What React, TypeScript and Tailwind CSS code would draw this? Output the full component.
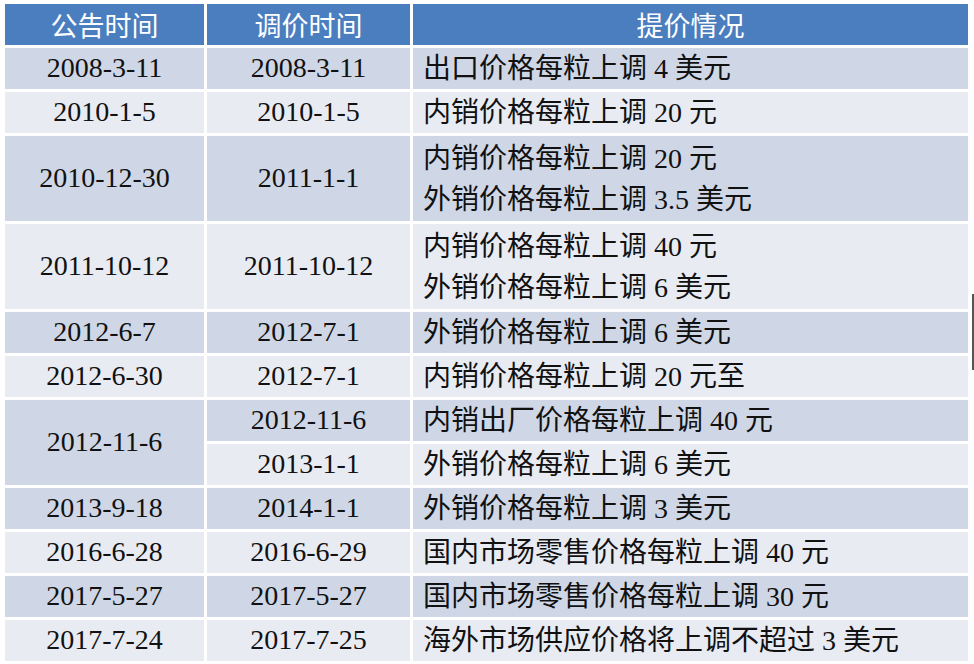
import React from "react";

type Row = {
  announce: string;
  span: number;
  subs: { date: string; lines: string[]; dark: boolean }[];
  dark: boolean;
};

const ROWS: Row[] = [
  { announce: "2008-3-11", span: 1, dark: true, subs: [{ date: "2008-3-11", lines: ["出口价格每粒上调 4 美元"], dark: true }] },
  { announce: "2010-1-5", span: 1, dark: false, subs: [{ date: "2010-1-5", lines: ["内销价格每粒上调 20 元"], dark: false }] },
  {
    announce: "2010-12-30",
    span: 2,
    dark: true,
    subs: [{ date: "2011-1-1", lines: ["内销价格每粒上调 20 元", "外销价格每粒上调 3.5 美元"], dark: true }],
  },
  {
    announce: "2011-10-12",
    span: 2,
    dark: false,
    subs: [{ date: "2011-10-12", lines: ["内销价格每粒上调 40 元", "外销价格每粒上调 6 美元"], dark: false }],
  },
  { announce: "2012-6-7", span: 1, dark: true, subs: [{ date: "2012-7-1", lines: ["外销价格每粒上调 6 美元"], dark: true }] },
  { announce: "2012-6-30", span: 1, dark: false, subs: [{ date: "2012-7-1", lines: ["内销价格每粒上调 20 元至"], dark: false }] },
  {
    announce: "2012-11-6",
    span: 2,
    dark: true,
    subs: [
      { date: "2012-11-6", lines: ["内销出厂价格每粒上调 40 元"], dark: true },
      { date: "2013-1-1", lines: ["外销价格每粒上调 6 美元"], dark: false },
    ],
  },
  { announce: "2013-9-18", span: 1, dark: true, subs: [{ date: "2014-1-1", lines: ["外销价格每粒上调 3 美元"], dark: true }] },
  { announce: "2016-6-28", span: 1, dark: false, subs: [{ date: "2016-6-29", lines: ["国内市场零售价格每粒上调 40 元"], dark: false }] },
  { announce: "2017-5-27", span: 1, dark: true, subs: [{ date: "2017-5-27", lines: ["国内市场零售价格每粒上调 30 元"], dark: true }] },
  { announce: "2017-7-24", span: 1, dark: false, subs: [{ date: "2017-7-25", lines: ["海外市场供应价格将上调不超过 3 美元"], dark: false }] },
];

function bg(dark: boolean) {
  return dark ? "bg-[#cfd7e6]" : "bg-[#e9ebf3]";
}

export default function App() {
  return (
    <div className="relative w-[974px] h-[664px] bg-white overflow-hidden">
      <div
        className="grid grid-cols-[199px_203px_555px] grid-rows-[41px_repeat(14,41px)] gap-[3px] pl-[5px] pt-[4px] text-[28px] text-[#111] font-['Liberation_Serif','Noto_Sans_CJK_SC',serif]"
      >
        {/* header */}
        {["公告时间", "调价时间", "提价情况"].map((h) => (
          <div
            key={h}
            className="flex items-center justify-center bg-[#4a7ebf] text-white font-['Noto_Sans_CJK_SC',sans-serif] text-[27px] leading-none"
          >
            {h}
          </div>
        ))}

        {ROWS.map((r) => (
          <React.Fragment key={r.announce}>
            <div
              className={`flex items-center justify-center pb-[2px] ${bg(r.dark)} ${
                r.span === 2 ? "row-span-2" : ""
              }`}
            >
              {r.announce}
            </div>
            {r.subs.map((s) => (
              <React.Fragment key={s.date + s.lines[0]}>
                <div
                  className={`flex items-center justify-center pb-[2px] ${bg(s.dark)} ${
                    r.subs.length === 1 && r.span === 2 ? "row-span-2" : ""
                  }`}
                >
                  {s.date}
                </div>
                <div
                  className={`flex flex-col justify-center pl-[10px] leading-[41px] whitespace-nowrap ${bg(
                    s.dark
                  )} ${r.subs.length === 1 && r.span === 2 ? "row-span-2" : ""}`}
                >
                  {s.lines.map((l) => (
                    <div key={l}>{l}</div>
                  ))}
                </div>
              </React.Fragment>
            ))}
          </React.Fragment>
        ))}
      </div>
      {/* stray edge mark */}
      <div className="absolute left-[972px] top-[294px] w-[2px] h-[76px] bg-[#555]" />
    </div>
  );
}
